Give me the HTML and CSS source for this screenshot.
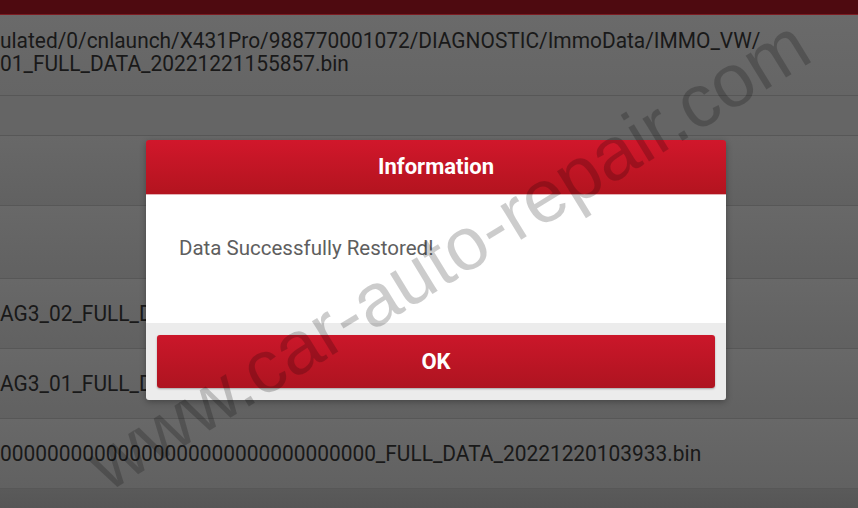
FILE: index.html
```html
<!DOCTYPE html>
<html lang="en">
<head>
    <meta charset="UTF-8">
    <meta name="viewport" content="width=device-width, initial-scale=1.0">
    <title>Immo Data Restore</title>
    <link rel="stylesheet" href="styles.css">
</head>
<body>
    <div class="screen">
        <!-- Title bar (dimmed behind the dialog) -->
        <div class="topbar"></div>

        <!-- File list -->
        <div class="list">
            <div class="row row-path">
                <span class="name">ulated/0/cnlaunch/X431Pro/988770001072/DIAGNOSTIC/ImmoData/IMMO_VW/</span>
                <span class="name">01_FULL_DATA_20221221155857.bin</span>
            </div>
            <div class="row row-short"></div>
            <div class="row"></div>
            <div class="row row-mid"></div>
            <div class="row"><span class="name">AG3_02_FULL_DATA_20221221155012.bin</span></div>
            <div class="row"><span class="name">AG3_01_FULL_DATA_20221221154530.bin</span></div>
            <div class="row"><span class="name">00000000000000000000000000000000_FULL_DATA_20221220103933.bin</span></div>
            <div class="row row-last"></div>
        </div>

        <!-- Information dialog -->
        <div class="dialog">
            <div class="dialog-title">Information</div>
            <div class="dialog-body">Data Successfully Restored!</div>
            <div class="dialog-footer">
                <button class="btn-ok">OK</button>
            </div>
        </div>

        <div class="watermark">www.car-auto-repair.com</div>
    </div>
</body>
</html>
```

FILE: styles.css
```css
/* Global styles */
body {
    margin: 0;
    padding: 0;
    background: #5c5c5c;
    font-family: 'Roboto', 'Noto Sans', sans-serif;
    overflow: hidden;
}

.screen {
    position: relative;
    width: 858px;
    height: 508px;
    overflow: hidden;
}

/* Title bar */
.topbar {
    height: 14px;
    background: #4e0a10;
    border-bottom: 1px solid #7c1c22;
}

/* File list */
.list {
    display: flex;
    flex-direction: column;
}

.row {
    height: 69px;
    display: flex;
    flex-direction: column;
    justify-content: center;
    background: linear-gradient(#686868, #616161);
    border-bottom: 1px solid #575757;
    overflow: hidden;
}

.row-path {
    height: 81px;
    justify-content: flex-start;
    padding-top: 14px;
    box-sizing: border-box;
    background: linear-gradient(#6a6a6a, #656565);
}

.row-short {
    height: 39px;
    background: #656565;
}

.row-mid {
    height: 72px;
}

.row-last {
    height: 30px;
    background: linear-gradient(#5a5a5a, #535353);
    border-bottom: none;
}

.name {
    display: block;
    white-space: nowrap;
    font-size: 22px;
    line-height: 23px;
    color: #191919;
    transform: scaleX(0.95);
    transform-origin: left center;
}

/* Dialog */
.dialog {
    position: absolute;
    left: 146px;
    top: 140px;
    width: 580px;
    border-radius: 3px;
    overflow: hidden;
    box-shadow: 0 2px 6px rgba(0, 0, 0, 0.3);
}

.dialog-title {
    height: 54px;
    line-height: 54px;
    text-align: center;
    font-size: 22px;
    font-weight: bold;
    color: #ffffff;
    background: linear-gradient(#d1172b, #b3141f);
    border-bottom: 1px solid #e4b0b4;
}

.dialog-body {
    height: 128px;
    box-sizing: border-box;
    padding: 41px 33px 0;
    background: #ffffff;
    font-size: 20.5px;
    color: #5e5e5e;
}

.dialog-footer {
    padding: 12px 11px 12px;
    background: #ececec;
}

.btn-ok {
    display: block;
    width: 100%;
    height: 53px;
    border: none;
    border-radius: 3px;
    background: linear-gradient(#cb172a, #ae1420);
    color: #ffffff;
    font-family: 'Roboto', 'Noto Sans', sans-serif;
    font-size: 22px;
    font-weight: bold;
    box-shadow: 0 1px 2px rgba(0, 0, 0, 0.3);
}

/* Watermark over everything */
.watermark {
    position: absolute;
    left: 448px;
    top: 254px;
    transform: translate(-50%, -50%) rotate(-31.5deg);
    white-space: nowrap;
    font-family: 'Liberation Sans', Arial, sans-serif;
    font-size: 75px;
    color: rgba(0, 0, 0, 0.2);
    pointer-events: none;
}
```
